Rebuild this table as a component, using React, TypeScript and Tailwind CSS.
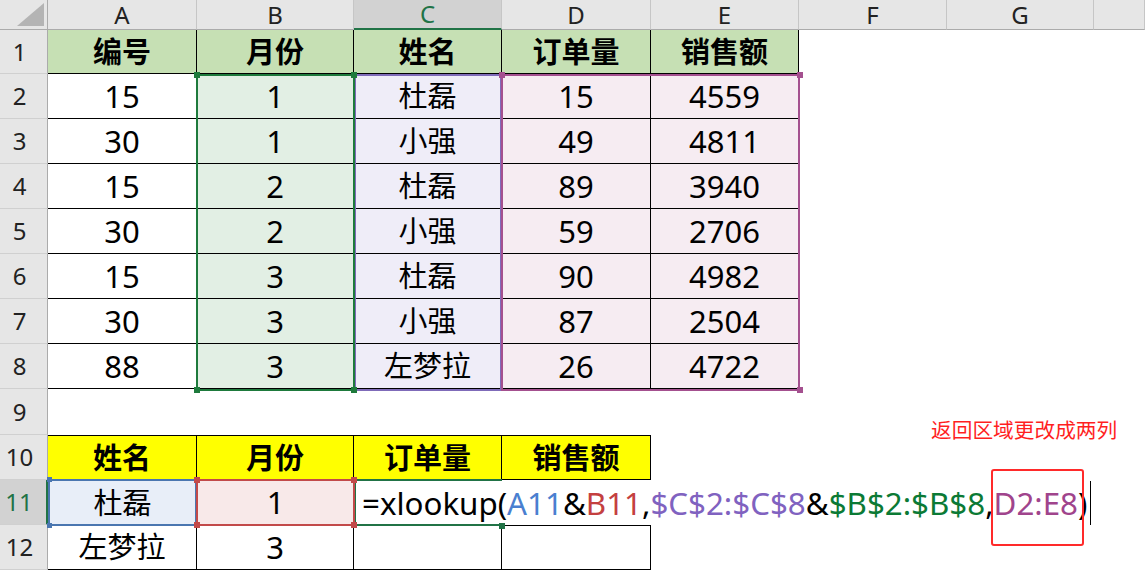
import React from "react";

const FONT = "font-['Noto_Sans','Noto_Sans_CJK_SC',sans-serif]";

const colHead =
  "flex items-center justify-center bg-[#e6e6e6] border-r border-b border-r-[#c6c6c6] border-b-[#ababab] text-[24px] leading-none text-[#222]";
const colHeadSel =
  "flex items-center justify-center bg-[#d2d2d2] border-r border-b-2 border-r-[#c6c6c6] border-b-[#217346] text-[24px] leading-none text-[#217346]";
const rowHead =
  "flex items-center justify-center pr-[8px] bg-[#e6e6e6] border-r border-b border-r-[#ababab] border-b-[#d0d0d0] text-[24px] leading-none text-[#222]";
const rowHeadSel =
  "flex items-center justify-center pr-[8px] bg-[#d2d2d2] border-r-2 border-b border-r-[#217346] border-b-[#d0d0d0] text-[24px] leading-none text-[#217346]";

const hdrGreen =
  "flex items-center justify-center bg-[#c6e0b4] border-r border-b border-black font-bold text-[29px] text-black";
const hdrYellow =
  "flex items-center justify-center bg-[#ffff00] border-r border-b border-t border-black font-bold text-[29px] text-black";

const cA = "flex items-center justify-center bg-white border-r border-b border-black text-[31px] text-black";
const cAcjk = "flex items-center justify-center bg-white border-r border-b border-black text-[29px] text-black";
const cB = "flex items-center justify-center bg-[#e2efe4] border-r border-b border-black text-[31px] text-black";
const cC = "flex items-center justify-center bg-[#efedf8] border-r border-b border-black text-[29px] text-black";
const cDE = "flex items-center justify-center bg-[#f6ecf2] border-r border-b border-black text-[31px] text-black";

const data: string[][] = [
  ["15", "1", "杜磊", "15", "4559"],
  ["30", "1", "小强", "49", "4811"],
  ["15", "2", "杜磊", "89", "3940"],
  ["30", "2", "小强", "59", "2706"],
  ["15", "3", "杜磊", "90", "4982"],
  ["30", "3", "小强", "87", "2504"],
  ["88", "3", "左梦拉", "26", "4722"],
];

function Sq({ cls }: { cls: string }) {
  return <div className={cls} />;
}

export default function App() {
  return (
    <div className={`relative w-[1145px] h-[571px] overflow-hidden bg-white ${FONT}`}>
      <div className="grid grid-cols-[48px_149px_157px_148px_149px_148px_148px_147px_1fr] grid-rows-[30px_44px_repeat(7,45px)_46px_repeat(3,45px)]">
        {/* column header row */}
        <div className="relative bg-[#e6e6e6] border-r border-b border-r-[#ababab] border-b-[#ababab]">
          <svg className="absolute left-0 top-0" width="48" height="30" viewBox="0 0 48 30">
            <polygon points="44,3 44,26 17,26" fill="#b4b4b4" />
          </svg>
        </div>
        <div className={colHead}>A</div>
        <div className={colHead}>B</div>
        <div className={colHeadSel}>C</div>
        <div className={colHead}>D</div>
        <div className={colHead}>E</div>
        <div className={colHead}>F</div>
        <div className={colHead}>G</div>
        <div className={colHead}></div>

        {/* row 1 */}
        <div className={rowHead}>1</div>
        <div className={hdrGreen}>编号</div>
        <div className={hdrGreen}>月份</div>
        <div className={hdrGreen}>姓名</div>
        <div className={hdrGreen}>订单量</div>
        <div className={hdrGreen}>销售额</div>
        <div />
        <div />
        <div />

        {/* rows 2-8 */}
        {data.map((r, i) => (
          <React.Fragment key={i}>
            <div className={rowHead}>{i + 2}</div>
            <div className={cA}>{r[0]}</div>
            <div className={cB}>{r[1]}</div>
            <div className={cC}>{r[2]}</div>
            <div className={cDE}>{r[3]}</div>
            <div className={cDE}>{r[4]}</div>
            <div />
            <div />
            <div />
          </React.Fragment>
        ))}

        {/* row 9 */}
        <div className={rowHead}>9</div>
        <div />
        <div />
        <div />
        <div />
        <div />
        <div />
        <div />
        <div />

        {/* row 10 */}
        <div className={rowHead}>10</div>
        <div className={hdrYellow}>姓名</div>
        <div className={hdrYellow}>月份</div>
        <div className={hdrYellow}>订单量</div>
        <div className={hdrYellow}>销售额</div>
        <div />
        <div />
        <div />
        <div />

        {/* row 11 */}
        <div className={rowHeadSel}>11</div>
        <div className="flex items-center justify-center bg-[#e8eef8] text-[29px] text-black">杜磊</div>
        <div className="flex items-center justify-center bg-[#f8e9e9] text-[31px] text-black">1</div>
        <div className="col-span-6 flex items-center pl-[8px] text-[31.3px] text-black whitespace-nowrap leading-[44px]">
          <span>=xlookup(</span>
          <span className="text-[#4a7fd0]">A11</span>
          <span>&amp;</span>
          <span className="text-[#c4403f]">B11</span>
          <span>,</span>
          <span className="text-[#8062c0]">$C$2:$C$8</span>
          <span>&amp;</span>
          <span className="text-[#0b7a35]">$B$2:$B$8</span>
          <span>,</span>
          <span className="relative inline-block h-[44px] text-[#a0448c]">
            D2:E8
            <span className="absolute -left-[3px] -right-[6px] -top-[12px] -bottom-[21px] border-2 border-[#ff2a2a] rounded-[3px]" />
          </span>
          <span>)</span>
          <span className="inline-block w-px h-[44px] bg-black ml-[3px]" />
        </div>

        {/* row 12 */}
        <div className={rowHead}>12</div>
        <div className={cAcjk}>左梦拉</div>
        <div className={cA}>3</div>
        <div className={cA}></div>
        <div className="bg-white border-r border-b border-t border-black"></div>
        <div />
        <div />
        <div />
        <div />
      </div>

      {/* range highlight overlays */}
      <div className="pointer-events-none absolute left-[354px] top-[74px] w-[148px] h-[317px] border-2 border-[#7f6bb9]" />
      <div className="pointer-events-none absolute left-[196px] top-[74px] w-[159px] h-[317px] border-2 border-[#1e7a3c]" />
      <div className="pointer-events-none absolute left-[501px] top-[74px] w-[299px] h-[317px] border-2 border-[#a4508f]" />
      <Sq cls="absolute left-[194px] top-[72px] w-[6px] h-[6px] bg-[#1e7a3c]" />
      <Sq cls="absolute left-[351px] top-[72px] w-[6px] h-[6px] bg-[#1e7a3c]" />
      <Sq cls="absolute left-[194px] top-[387px] w-[6px] h-[6px] bg-[#1e7a3c]" />
      <Sq cls="absolute left-[351px] top-[387px] w-[6px] h-[6px] bg-[#1e7a3c]" />
      <Sq cls="absolute left-[499px] top-[72px] w-[6px] h-[6px] bg-[#a4508f]" />
      <Sq cls="absolute left-[797px] top-[72px] w-[6px] h-[6px] bg-[#a4508f]" />
      <Sq cls="absolute left-[797px] top-[387px] w-[6px] h-[6px] bg-[#a4508f]" />

      {/* row 11 overlays */}
      <div className="pointer-events-none absolute left-[48px] top-[479px] w-[149px] h-[47px] border-2 border-[#4a76b0]" />
      <div className="pointer-events-none absolute left-[354px] top-[479px] w-[148px] h-[47px] border-t-2 border-b-2 border-l-2 border-[#217346]" />
      <div className="pointer-events-none absolute left-[196px] top-[479px] w-[159px] h-[47px] border-2 border-[#c24a4a]" />
      <Sq cls="absolute left-[47px] top-[477px] w-[5px] h-[5px] bg-[#4a76b0]" />
      <Sq cls="absolute left-[47px] top-[523px] w-[5px] h-[5px] bg-[#4a76b0]" />
      <Sq cls="absolute left-[194px] top-[477px] w-[6px] h-[6px] bg-[#c24a4a]" />
      <Sq cls="absolute left-[351px] top-[477px] w-[6px] h-[6px] bg-[#c24a4a]" />
      <Sq cls="absolute left-[194px] top-[522px] w-[6px] h-[6px] bg-[#c24a4a]" />
      <Sq cls="absolute left-[351px] top-[522px] w-[6px] h-[6px] bg-[#c24a4a]" />
      <Sq cls="absolute left-[499px] top-[523px] w-[6px] h-[6px] bg-[#217346]" />

      {/* annotation */}
      <div className="absolute left-[931px] top-[420px] text-[20.7px] leading-none text-[#ff1f1f] whitespace-nowrap">
        返回区域更改成两列
      </div>
    </div>
  );
}
